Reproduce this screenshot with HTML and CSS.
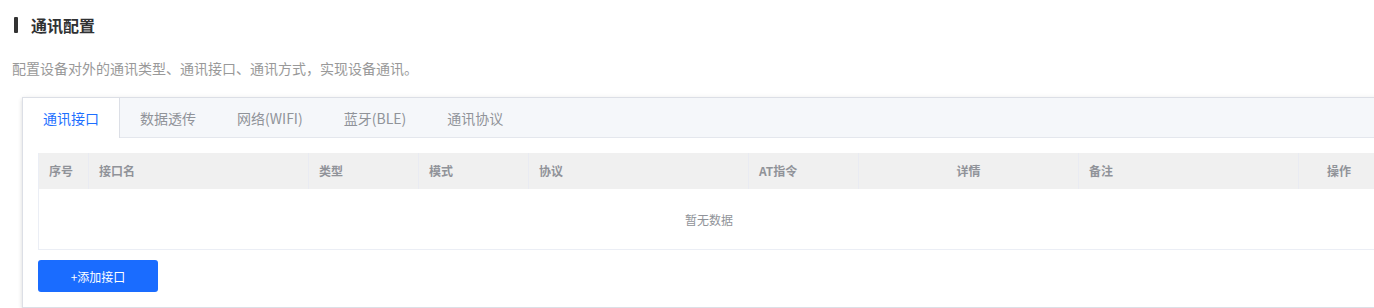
FILE: index.html
```html
<!DOCTYPE html>
<html lang="zh-CN">
<head>
<meta charset="utf-8">
<title>通讯配置</title>
<link rel="stylesheet" href="styles.css">
</head>
<body>
<div class="page">
  <div class="title-row">
    <span class="title-bar"></span>
    <h2 class="title">通讯配置</h2>
  </div>
  <p class="desc">配置设备对外的通讯类型、通讯接口、通讯方式，实现设备通讯。</p>
  <div class="card">
    <div class="tabs">
      <div class="tab active">通讯接口</div>
      <div class="tab">数据透传</div>
      <div class="tab">网络(WIFI)</div>
      <div class="tab">蓝牙(BLE)</div>
      <div class="tab">通讯协议</div>
    </div>
    <div class="card-body">
      <div class="table">
        <div class="thead">
          <div class="th">序号</div>
          <div class="th">接口名</div>
          <div class="th">类型</div>
          <div class="th">模式</div>
          <div class="th">协议</div>
          <div class="th">AT指令</div>
          <div class="th center">详情</div>
          <div class="th">备注</div>
          <div class="th center last">操作</div>
        </div>
        <div class="empty">暂无数据</div>
      </div>
      <button class="btn">+添加接口</button>
    </div>
  </div>
</div>
</body>
</html>
```

FILE: styles.css
```css
html, body {
  margin: 0;
  padding: 0;
  background: #fff;
  overflow: hidden;
}

body {
  font-family: "Microsoft YaHei", "Noto Sans CJK SC", "Noto Sans", sans-serif;
}

.page {
  width: 1374px;
}

.title-row {
  display: flex;
  align-items: center;
  gap: 13px;
  height: 22px;
  margin-top: 14px;
  padding-left: 14px;
}

.title-bar {
  width: 4px;
  height: 16px;
  background: #333;
  border-radius: 1px;
}

.title {
  margin: 0;
  font-size: 16px;
  font-weight: bold;
  line-height: 22px;
  color: #303133;
}

.desc {
  margin: 22px 0 0 12px;
  font-size: 14px;
  line-height: 20px;
  color: #999;
}

.card {
  margin: 19px 0 0 22px;
  width: 1374px;
  box-sizing: border-box;
  border: 1px solid #dcdfe6;
  background: #fff;
  box-shadow: 0 2px 4px 0 rgba(0, 0, 0, 0.12), 0 0 6px 0 rgba(0, 0, 0, 0.04);
}

.tabs {
  display: flex;
  height: 40px;
  box-sizing: border-box;
  background: #f5f7fa;
  border-bottom: 1px solid #e4e7ed;
}

.tab {
  flex: none;
  height: 40px;
  line-height: 40px;
  padding: 0 20px;
  font-size: 14px;
  color: #909399;
  border-left: 1px solid transparent;
  border-right: 1px solid transparent;
  margin-left: -1px;
}

.tab.active {
  background: #fff;
  color: #1e6fff;
  border-left-color: #dcdfe6;
  border-right-color: #dcdfe6;
}

.card-body {
  padding: 15px;
}

.table {
  border-left: 1px solid #ebeef5;
  border-right: 1px solid #ebeef5;
  border-bottom: 1px solid #ebeef5;
}

.thead {
  display: grid;
  grid-template-columns: 50px 220px 110px 110px 220px 110px 220px 220px 1fr;
  height: 36px;
  background: #f0f0f0;
}

.th {
  padding: 0 10px;
  line-height: 36px;
  font-size: 12px;
  font-weight: bold;
  color: #909399;
  border-right: 1px solid #e9ebf2;
  white-space: nowrap;
  overflow: hidden;
}

.th.center {
  text-align: center;
}

.th.last {
  border-right: none;
}

.empty {
  height: 60px;
  display: flex;
  align-items: center;
  justify-content: center;
  font-size: 12px;
  color: #909399;
}

.btn {
  display: block;
  margin-top: 10px;
  width: 120px;
  height: 32px;
  padding: 0;
  border: none;
  border-radius: 3px;
  background: #1a6cff;
  color: #fff;
  font-family: inherit;
  font-size: 12px;
}
```
